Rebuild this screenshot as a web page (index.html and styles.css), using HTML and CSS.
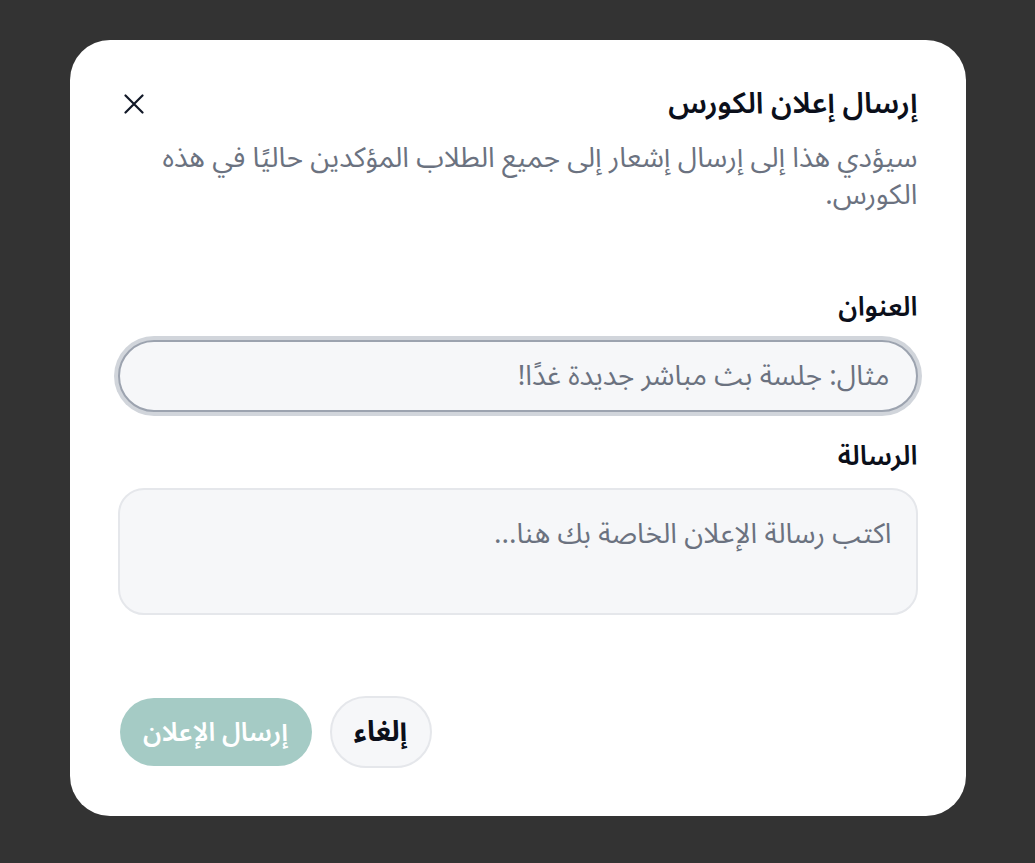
FILE: index.html
```html
<!DOCTYPE html>
<html lang="ar" dir="rtl">
<head>
<meta charset="utf-8">
<title>إرسال إعلان الكورس</title>
<link rel="stylesheet" href="styles.css">
</head>
<body>
<div class="overlay">
  <div class="modal" role="dialog">
    <div class="header">
      <h2 class="title">إرسال إعلان الكورس</h2>
      <button class="close" aria-label="إغلاق">
        <svg width="20" height="20" viewBox="0 0 20 20" fill="none" stroke="#111827" stroke-width="2.2" stroke-linecap="round"><path d="M1.5 1.5 18.5 18.5M18.5 1.5 1.5 18.5"/></svg>
      </button>
    </div>
    <p class="desc">سيؤدي هذا إلى إرسال إشعار إلى جميع الطلاب المؤكدين حاليًا في هذه الكورس.</p>
    <form class="form">
      <label class="label" for="t">العنوان</label>
      <input id="t" class="input focused" type="text" placeholder="مثال: جلسة بث مباشر جديدة غدًا!">
      <label class="label second" for="m">الرسالة</label>
      <textarea id="m" class="textarea" placeholder="اكتب رسالة الإعلان الخاصة بك هنا..."></textarea>
    </form>
    <div class="footer">
      <button class="btn cancel">إلغاء</button>
      <button class="btn send" disabled>إرسال الإعلان</button>
    </div>
  </div>
</div>
</body>
</html>
```
FILE: styles.css
```css
html, body {
  margin: 0;
  padding: 0;
  height: 100%;
}
body {
  background: #333333;
  font-family: "Noto Sans Arabic", "Noto Sans", sans-serif;
  color: #111827;
}
.overlay {
  height: 100%;
  display: flex;
  justify-content: center;
  padding-top: 40px;
  box-sizing: border-box;
}
.modal {
  width: 896px;
  height: 776px;
  box-sizing: border-box;
  background: #ffffff;
  border-radius: 40px;
  padding: 48px;
  display: flex;
  flex-direction: column;
}
.header {
  display: flex;
  align-items: center;
  justify-content: space-between;
  height: 32px;
}
.title {
  margin: 0;
  font-size: 29.5px;
  font-weight: 600;
  color: #0b0f1a;
  line-height: 32px;
}
.close {
  background: none;
  border: 0;
  padding: 0;
  margin-left: 6px;
  width: 20px;
  height: 20px;
  display: flex;
}
.desc {
  margin: 20px 0 0;
  font-size: 28px;
  line-height: 37px;
  color: #6b7280;
}
.form {
  display: flex;
  flex-direction: column;
  margin-top: 78px;
}
.label {
  font-size: 27px;
  font-weight: 600;
  line-height: 32px;
  color: #0b0f1a;
  margin-bottom: 16px;
}
.label.second {
  margin-top: 29px;
  margin-bottom: 15px;
}
.input, .textarea {
  font-family: inherit;
  font-size: 28px;
  color: #111827;
  background: #f6f7f9;
  border: 2px solid #e5e7eb;
  box-sizing: border-box;
  outline: none;
  width: 100%;
}
.input {
  height: 72px;
  border-radius: 36px;
  padding: 0 26px;
}
.input.focused {
  border-color: #9ca3af;
  box-shadow: 0 0 0 4px #d1d5db;
}
.textarea {
  height: 127px;
  border-radius: 26px;
  padding: 27px 24px 0;
  resize: none;
  line-height: 36px;
}
.input::placeholder, .textarea::placeholder {
  color: #6b7280;
  opacity: 1;
}
.footer {
  margin-top: auto;
  display: flex;
  justify-content: flex-end;
  align-items: center;
  gap: 18px;
  padding-left: 2px;
}
.btn {
  font-family: inherit;
  font-weight: 600;
  height: 72px;
  border-radius: 36px;
  cursor: pointer;
  padding: 0;
}
.cancel {
  width: 102px;
  font-size: 28px;
  font-weight: 700;
  background: #f6f7f9;
  border: 2px solid #e5e7eb;
  color: #0b0f1a;
}
.send {
  width: 192px;
  height: 68px;
  font-size: 26px;
  background: #a5cbc5;
  border: 0;
  color: #ffffff;
}
```
